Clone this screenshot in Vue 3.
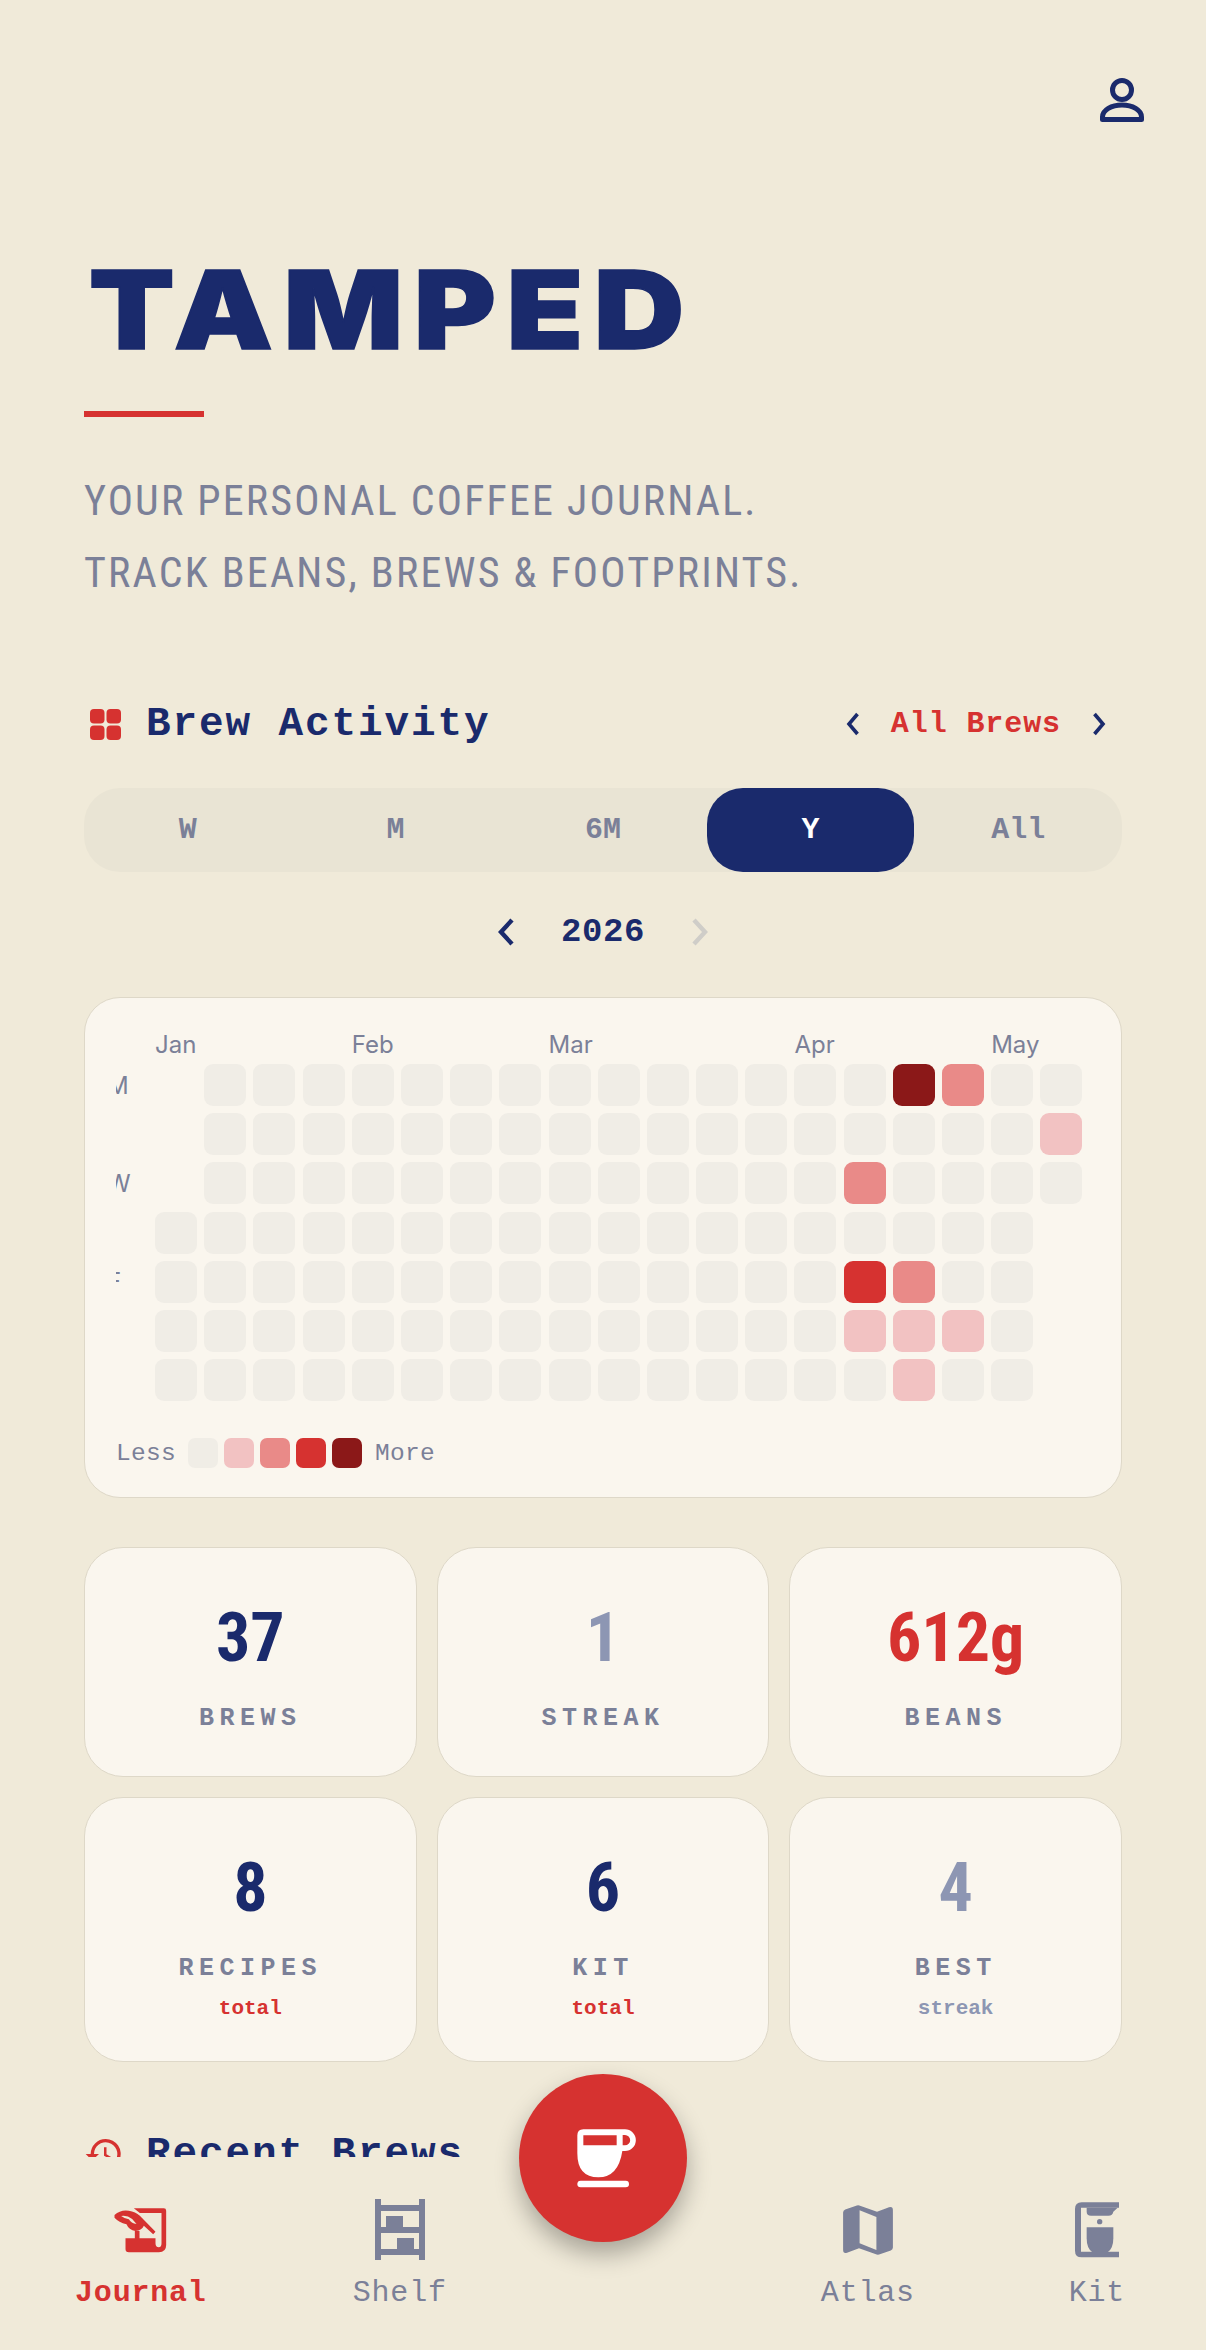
<script setup>
const months = [
  { name: "Jan", col: 1 },
  { name: "Feb", col: 5 },
  { name: "Mar", col: 9 },
  { name: "Apr", col: 14 },
  { name: "May", col: 18 },
];

const dayLabels = ["M", "", "W", "", "F", "", ""];

// level per day: row-col, everything else is 0
const levels = {
  "0-15": 4,
  "0-16": 2,
  "1-18": 1,
  "2-14": 2,
  "4-14": 3,
  "4-15": 2,
  "5-14": 1,
  "5-15": 1,
  "5-16": 1,
  "6-15": 1,
};

const cells = [];
for (let r = 0; r < 7; r++) {
  for (let c = 0; c < 19; c++) {
    const hidden = (c === 0 && r < 3) || (c === 18 && r > 2);
    cells.push({ id: r + "-" + c, hidden, level: levels[r + "-" + c] || 0 });
  }
}

const ranges = ["W", "M", "6M", "Y", "All"];

const stats = [
  { value: "37", label: "BREWS", tone: "navy" },
  { value: "1", label: "STREAK", tone: "muted" },
  { value: "612g", label: "BEANS", tone: "red" },
  { value: "8", label: "RECIPES", sub: "total", tone: "navy" },
  { value: "6", label: "KIT", sub: "total", tone: "navy" },
  { value: "4", label: "BEST", sub: "streak", tone: "muted" },
];
</script>

<template>
  <div class="page">
    <header class="topbar">
      <svg class="profile" viewBox="0 0 48 48" fill="none" stroke="#1a2a6c" stroke-width="5">
        <circle cx="24" cy="13" r="9.500" />
        <path d="M4.500 42.500V40c0-7 9-12 19.500-12s19.500 5 19.500 12v2.500z" stroke-linejoin="round" />
      </svg>
    </header>

    <section class="hero">
      <h1>TAMPED</h1>
      <div class="rule"></div>
      <p>YOUR PERSONAL COFFEE JOURNAL.</p>
      <p>TRACK BEANS, BREWS &amp; FOOTPRINTS.</p>
    </section>

    <section class="activity">
      <div class="head">
        <div class="title">
          <svg class="title-icon" viewBox="0 0 31 31" fill="#d63230">
            <rect x="0" y="0" width="14.500" height="14.500" rx="4" />
            <rect x="16.500" y="0" width="14.500" height="14.500" rx="4" />
            <rect x="0" y="16.500" width="14.500" height="14.500" rx="4" />
            <rect x="16.500" y="16.500" width="14.500" height="14.500" rx="4" />
          </svg>
          <h2>Brew Activity</h2>
        </div>
        <div class="filter">
          <svg class="chev" viewBox="0 0 14 24" fill="none" stroke="#1a2a6c" stroke-width="3.600"><path d="M11.500 2 3 12l8.500 10" /></svg>
          <span>All Brews</span>
          <svg class="chev" viewBox="0 0 14 24" fill="none" stroke="#1a2a6c" stroke-width="3.600"><path d="M2.500 2 11 12 2.500 22" /></svg>
        </div>
      </div>

      <div class="ranges">
        <div v-for="r in ranges" :key="r" class="range" :class="{ active: r === 'Y' }">{{ r }}</div>
      </div>

      <div class="year">
        <svg class="year-chev" viewBox="0 0 18 28" fill="none" stroke="#1a2a6c" stroke-width="4.400"><path d="M15 2 4 14l11 12" /></svg>
        <span>2026</span>
        <svg class="year-chev" viewBox="0 0 18 28" fill="none" stroke="#cfcdc8" stroke-width="4.400"><path d="M3 2l11 12L3 26" /></svg>
      </div>

      <div class="heat">
        <div class="months">
          <span v-for="m in months" :key="m.name" :style="{ gridColumn: m.col }">{{ m.name }}</span>
        </div>
        <div class="body">
          <div class="days">
            <div v-for="(d, i) in dayLabels" :key="i" class="day"><span>{{ d }}</span></div>
          </div>
          <div class="grid">
            <div
              v-for="cell in cells"
              :key="cell.id"
              class="cell"
              :class="[cell.hidden ? 'blank' : 'l' + cell.level]"
            ></div>
          </div>
        </div>
        <div class="legend">
          <span>Less</span>
          <i class="l0"></i><i class="l1"></i><i class="l2"></i><i class="l3"></i><i class="l4"></i>
          <span class="more">More</span>
        </div>
      </div>

      <div class="stats">
        <div v-for="s in stats" :key="s.label" class="stat" :class="{ tall: s.sub }">
          <div class="value" :class="s.tone">{{ s.value }}</div>
          <div class="label">{{ s.label }}</div>
          <div v-if="s.sub" class="sub" :class="s.tone === 'muted' ? 'muted' : 'red'">{{ s.sub }}</div>
        </div>
      </div>

      <div class="recent">
        <svg class="recent-icon" viewBox="0 0 24 24" fill="#d63230">
          <path d="M13 3a9 9 0 0 0-9 9H1l3.900 3.900L9 12H6a7 7 0 1 1 2.100 5L6.700 18.400A9 9 0 1 0 13 3zm-1 5v5l4.300 2.500.7-1.200-3.500-2.100V8z" />
        </svg>
        <h2>Recent Brews</h2>
      </div>
    </section>

    <nav class="tabs">
      <div class="tab on">
        <svg viewBox="13.500 -3 216 216" fill="#d63230">
          <path d="M100 40H190Q197 40 197 47V150Q197 172 175 172H85Q75 172 75 162V130H103V108H117V130H165V145Q165 157 175 157Q183 157 183 145V54H118Z" />
          <path fill-rule="evenodd" d="M42 60Q60 43 85 47Q105 50 118 62L165 110L158 118L130 92Q125 105 105 108Q85 105 78 88Q55 82 42 68ZM62 63Q80 60 95 72L108 87Q92 85 85 73Q72 71 62 63Z" />
        </svg>
        <span>Journal</span>
      </div>
      <div class="tab">
        <svg viewBox="0 0 72 72" fill="#7b8098">
          <rect x="11" y="5" width="6" height="61" />
          <rect x="55" y="5" width="6" height="61" />
          <rect x="17" y="11" width="38" height="6" />
          <rect x="17" y="33" width="38" height="6" />
          <rect x="17" y="55" width="38" height="6" />
          <rect x="22" y="22" width="17" height="11" />
          <rect x="33" y="44" width="17" height="11" />
        </svg>
        <span>Shelf</span>
      </div>
      <div class="tab-gap"></div>
      <div class="tab">
        <svg viewBox="0 0 24 24" fill="#7b8098">
          <path fill-rule="evenodd" d="M3.700 6.200q0-.7.700-1L8.300 3.800q.4-.1.800 0L15 5.900l4-1.500q1.300-.4 1.300 1V17.800q0 .7-.7 1L15.700 20.200q-.4.100-.8 0L9 18.100l-4 1.500q-1.300.4-1.300-1zM9.200 5.400V16.400l5.600 2.300V7.700z" />
        </svg>
        <span>Atlas</span>
      </div>
      <div class="tab">
        <svg viewBox="8 -3 216 216" fill="#7b8098">
          <path d="M70 22H182V38H68V170H182V187H70Q50 187 50 167V42Q50 22 70 22Z" />
          <path d="M85 38H178L165 50Q163 62 150 62H98Q85 62 85 50Z" />
          <circle cx="124" cy="80" r="8" />
          <path d="M85 97H165V130Q165 160 148 172H102Q85 160 85 130Z" />
        </svg>
        <span>Kit</span>
      </div>
    </nav>

    <button class="fab">
      <svg viewBox="21 6 216 216" fill="#fff">
        <path fill-rule="evenodd" d="M70 28H195A32.500 32.500 0 0 1 195 93H187Q175 172 115 172Q52 172 52 100V46Q52 28 70 28ZM70 46V76H170V46ZM188 45V76H195A15.500 15.500 0 0 0 195 45Z" />
        <rect x="52" y="182" width="155" height="20" rx="10" />
      </svg>
    </button>
  </div>
</template>

<style>
html,
body {
  margin: 0;
  background: #f0ead9;
}
</style>

<style scoped>
.page {
  position: relative;
  width: 1206px;
  height: 2350px;
  overflow: hidden;
  background: #f0ead9;
  font-family: "Liberation Mono", monospace;
  color: #1a2a6c;
}

.topbar {
  display: flex;
  justify-content: flex-end;
  padding: 77px 60px 0 0;
}

.profile {
  width: 48px;
  height: 48px;
}

.hero {
  padding: 120px 84px 0;
}

.hero h1 {
  margin: 0;
  font-family: "Inter", sans-serif;
  font-weight: 900;
  font-size: 108px;
  line-height: 130px;
  letter-spacing: 9px;
  padding-left: 4px;
  color: #1a2a6c;
  -webkit-text-stroke: 1.500px #1a2a6c;
  transform: scaleX(1.16);
  transform-origin: left;
}

.rule {
  width: 120px;
  height: 6px;
  margin: 36px 0 48px;
  background: #d63230;
}

.hero p {
  margin: 0;
  height: 72px;
  font-family: "Roboto", sans-serif;
  font-stretch: 75%;
  font-size: 42px;
  line-height: 72px;
  letter-spacing: 2.200px;
  color: #7b8098;
}

.activity {
  padding: 0 84px;
}

.head {
  display: flex;
  justify-content: space-between;
  align-items: center;
  margin-top: 91px;
  height: 48px;
}

.title {
  display: flex;
  align-items: center;
  gap: 25px;
  padding-left: 6px;
}

.title-icon {
  width: 31px;
  height: 31px;
}

h2 {
  margin: 0;
  font-size: 41px;
  font-weight: 700;
  letter-spacing: 1.900px;
  color: #1a2a6c;
}

.filter {
  display: flex;
  align-items: center;
  gap: 31px;
  padding-right: 16px;
  font-size: 30px;
  font-weight: 700;
  letter-spacing: 0.900px;
  color: #d63230;
}

.chev {
  width: 14px;
  height: 24px;
}

.ranges {
  display: grid;
  grid-template-columns: repeat(5, 1fr);
  height: 84px;
  margin-top: 40px;
  border-radius: 36px;
  background: #e9e4d4;
}

.range {
  display: flex;
  align-items: center;
  justify-content: center;
  border-radius: 36px;
  font-size: 30px;
  font-weight: 700;
  color: #7b8098;
}

.range.active {
  background: #1a2a6c;
  color: #fff;
}

.year {
  display: flex;
  align-items: center;
  justify-content: center;
  gap: 46px;
  height: 40px;
  margin-top: 40px;
  font-size: 34px;
  font-weight: 700;
  letter-spacing: 0.600px;
}

.year-chev {
  width: 18px;
  height: 28px;
}

.heat {
  box-sizing: border-box;
  height: 501px;
  margin-top: 45px;
  padding: 31px 30px 0 31px;
  border: 1.500px solid #ded8c8;
  border-radius: 36px;
  background: #faf6ee;
}

.months {
  display: grid;
  grid-template-columns: repeat(19, 42px);
  column-gap: 7.200px;
  height: 30px;
  margin-left: 39px;
  font-family: "Inter", sans-serif;
  font-size: 24px;
  line-height: 32px;
  color: #7b8098;
  white-space: nowrap;
}

.body {
  display: flex;
  margin-top: 5px;
}

.days {
  display: grid;
  grid-template-rows: repeat(7, 42px);
  row-gap: 7.200px;
  flex: none;
  width: 39px;
}

.day {
  display: flex;
  align-items: center;
  width: 15px;
  overflow: hidden;
  font-family: "Inter", sans-serif;
  font-size: 24px;
  color: #7b8098;
}

.day span {
  margin-left: -9px;
}

.grid {
  display: grid;
  grid-template-columns: repeat(19, 42px);
  grid-template-rows: repeat(7, 42px);
  gap: 7.200px;
}

.cell {
  border-radius: 9px;
}

.cell.blank {
  background: transparent;
}

.l0 {
  background: #f0ede6;
}

.l1 {
  background: #f2c2c2;
}

.l2 {
  background: #e98a88;
}

.l3 {
  background: #d63230;
}

.l4 {
  background: #8b1818;
}

.legend {
  display: flex;
  align-items: center;
  height: 32px;
  margin-top: 36px;
  font-size: 24.500px;
  letter-spacing: 0.300px;
  color: #7b8098;
}

.legend span {
  width: 72px;
}

.legend i {
  width: 30px;
  height: 30px;
  margin-right: 6px;
  border-radius: 7px;
}

.legend .more {
  margin-left: 7px;
}

.stats {
  display: grid;
  grid-template-columns: repeat(3, 1fr);
  gap: 20px;
  margin-top: 49px;
}

.stat {
  box-sizing: border-box;
  display: flex;
  flex-direction: column;
  align-items: center;
  height: 230px;
  padding-top: 50px;
  border: 1.500px solid #ded8c8;
  border-radius: 39px;
  background: #faf6ee;
}

.stat.tall {
  height: 265px;
}

.value {
  height: 80px;
  font-family: "Roboto", sans-serif;
  font-stretch: 75%;
  font-size: 68px;
  font-weight: 700;
  line-height: 80px;
}

.navy {
  color: #1a2a6c;
}

.muted {
  color: #8d96b3;
}

.red {
  color: #d63230;
}

.label {
  margin-top: 25px;
  font-size: 25px;
  font-weight: 700;
  line-height: 32px;
  letter-spacing: 5.500px;
  color: #7b8098;
}

.sub {
  margin-top: 10px;
  font-size: 21px;
  font-weight: 700;
  line-height: 28px;
}

.recent {
  display: flex;
  align-items: center;
  gap: 22px;
  margin-top: 68px;
  height: 48px;
}

.recent-icon {
  width: 40px;
  height: 40px;
}

.tabs {
  position: absolute;
  left: 0;
  right: 0;
  bottom: 0;
  display: flex;
  justify-content: space-around;
  box-sizing: border-box;
  height: 193px;
  padding-left: 2px;
  background: #f0ead9;
}

.tab {
  display: flex;
  flex-direction: column;
  align-items: center;
  padding-top: 37px;
  font-size: 30px;
  line-height: 40px;
  letter-spacing: 0.800px;
  color: #7b8098;
}

.tab svg {
  width: 72px;
  height: 72px;
  margin-bottom: 7px;
}

.tab.on {
  font-weight: 700;
  color: #d63230;
}

.tab-gap {
  width: 82px;
}

.fab {
  position: absolute;
  left: 519px;
  top: 2074px;
  display: flex;
  align-items: center;
  justify-content: center;
  width: 168px;
  height: 168px;
  padding: 0;
  border: 0;
  border-radius: 50%;
  background: #d63230;
  box-shadow: 0 12px 24px rgba(0, 0, 0, 0.3);
}

.fab svg {
  width: 72px;
  height: 72px;
}
</style>
